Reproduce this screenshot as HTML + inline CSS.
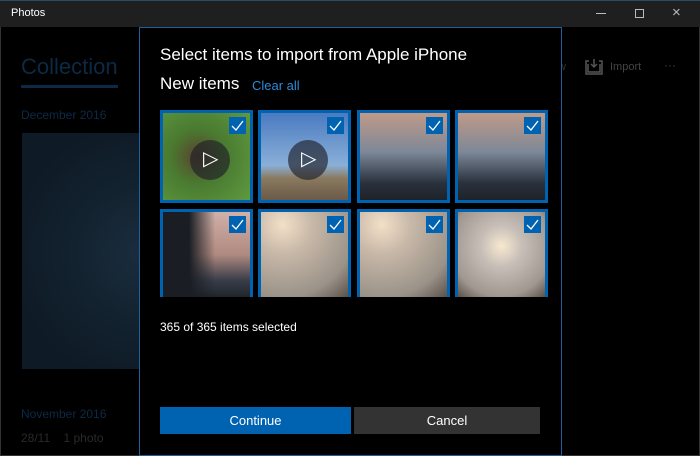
<!DOCTYPE html>
<html><head><style>
*{margin:0;padding:0;box-sizing:border-box}
body{width:700px;height:456px;background:#000;position:relative;overflow:hidden;font-family:"Segoe UI","Liberation Sans",sans-serif;color:#fff}
.abs{position:absolute}
.title{left:0;top:0;width:700px;height:27px;background:#1f1f1f;border-top:1px solid #2a4a6a}
.tile{position:absolute;width:93px;height:93px;border:3px solid #0063b1;overflow:hidden}
.chk{position:absolute;right:4px;top:4px;width:17px;height:17px;background:#0063b1}
.chk svg{position:absolute;left:2px;top:3px}
.play{position:absolute;left:27px;top:27px;width:40px;height:40px;border-radius:50%;background:rgba(30,30,40,.65)}
</style></head><body>
<div class="abs title"></div>
<div class="abs" style="left:11px;top:7px;font-size:11px;color:#fff">Photos</div>
<div class="abs" style="left:596px;top:13px;width:10px;height:1px;background:#bbb"></div>
<div class="abs" style="left:635px;top:9px;width:9px;height:9px;border:1px solid #bbb"></div>
<div class="abs" style="left:672px;top:4px;font-size:15px;color:#bbb">×</div>
<div class="abs" style="left:0;top:27px;width:1px;height:429px;background:#333"></div>
<div class="abs" style="left:699px;top:27px;width:1px;height:429px;background:#333"></div>
<div class="abs" style="left:0;top:455px;width:700px;height:1px;background:#333"></div>
<div class="abs" style="left:21px;top:54px;font-size:22px;color:#0c2a45">Collection</div>
<div class="abs" style="left:21px;top:85px;width:97px;height:3px;background:#0c2a45"></div>
<div class="abs" style="left:21px;top:108px;font-size:12px;color:#0c2a45">December 2016</div>
<div class="abs" style="left:22px;top:133px;width:118px;height:236px;background:radial-gradient(circle at 120px 120px,#1a2d3e 0,#13222f 40%,#0e1a26 80%)"></div>
<div class="abs" style="left:21px;top:407px;font-size:12px;color:#0c2a45">November 2016</div>
<div class="abs" style="left:21px;top:431px;font-size:12px;color:#2a2a2a">28/11 &nbsp;&nbsp; 1 photo</div>
<div class="abs" style="left:558px;top:61px;font-size:11px;color:#333">w</div>
<svg class="abs" style="left:585px;top:58px" width="18" height="17"><path d="M4 3H1v13h16V3h-3M3 6v8h12V6" fill="none" stroke="#555" stroke-width="1.5"/><path d="M9 1v8M6 6l3 3 3-3" fill="none" stroke="#555" stroke-width="1.5"/></svg>
<div class="abs" style="left:610px;top:61px;font-size:11px;color:#444">Import</div>
<div class="abs" style="left:664px;top:58px;font-size:12px;color:#444">···</div>
<div class="abs" style="left:139px;top:27px;width:423px;height:429px;background:#000;border:1px solid #1f5f9a"></div>
<div class="abs" style="left:160px;top:45px;font-size:17px">Select items to import from Apple iPhone</div>
<div class="abs" style="left:160px;top:74px;font-size:17px">New items</div>
<div class="abs" style="left:252px;top:78px;font-size:13px;color:#2b8ad8">Clear all</div>
<div class="tile" style="left:160px;top:110px;background:radial-gradient(circle at 40% 50%,#5a4030 0,#4a7a30 40%,#5e9a40 100%)"><div class="play"><span style="position:absolute;left:13px;top:6px;font-size:20px">▷</span></div><div class="chk"><svg width="13" height="11"><path d="M1 6l4 4 7-9" fill="none" stroke="#fff" stroke-width="1.3"/></svg></div></div>
<div class="tile" style="left:258px;top:110px;background:linear-gradient(#4a7ac0,#8ab0d8 60%,#8a7a60 75%,#6a5a48)"><div class="play"><span style="position:absolute;left:13px;top:6px;font-size:20px">▷</span></div><div class="chk"><svg width="13" height="11"><path d="M1 6l4 4 7-9" fill="none" stroke="#fff" stroke-width="1.3"/></svg></div></div>
<div class="tile" style="left:357px;top:110px;background:linear-gradient(#c09a88,#7c8898 45%,#2a323e 80%,#1e2228)"><div class="chk"><svg width="13" height="11"><path d="M1 6l4 4 7-9" fill="none" stroke="#fff" stroke-width="1.3"/></svg></div></div>
<div class="tile" style="left:455px;top:110px;background:linear-gradient(#c09a88,#7c8898 45%,#2a323e 80%,#1e2228)"><div class="chk"><svg width="13" height="11"><path d="M1 6l4 4 7-9" fill="none" stroke="#fff" stroke-width="1.3"/></svg></div></div>
<div class="tile" style="left:160px;top:209px;height:88px;border-bottom:none;background:linear-gradient(90deg,#1a1e24 30%,transparent 60%),linear-gradient(#d0b0a8,#b08a80 50%,#3a3e4a 80%,#20242a)"><div class="chk"><svg width="13" height="11"><path d="M1 6l4 4 7-9" fill="none" stroke="#fff" stroke-width="1.3"/></svg></div></div>
<div class="tile" style="left:258px;top:209px;height:88px;border-bottom:none;background:radial-gradient(circle at 25% 15%,#f4e0c8 0,#c8b8a8 30%,#9a9288 75%,#5a5248 100%)"><div class="chk"><svg width="13" height="11"><path d="M1 6l4 4 7-9" fill="none" stroke="#fff" stroke-width="1.3"/></svg></div></div>
<div class="tile" style="left:357px;top:209px;height:88px;border-bottom:none;background:radial-gradient(circle at 25% 15%,#f4e0c8 0,#c8b8a8 30%,#9a9288 75%,#5a5248 100%)"><div class="chk"><svg width="13" height="11"><path d="M1 6l4 4 7-9" fill="none" stroke="#fff" stroke-width="1.3"/></svg></div></div>
<div class="tile" style="left:455px;top:209px;height:88px;border-bottom:none;background:radial-gradient(circle at 50% 40%,#f8e8d0 0,#c8c0b8 30%,#a09890 75%,#5a5248 100%)"><div class="chk"><svg width="13" height="11"><path d="M1 6l4 4 7-9" fill="none" stroke="#fff" stroke-width="1.3"/></svg></div></div>
<div class="abs" style="left:160px;top:320px;font-size:12px">365 of 365 items selected</div>
<div class="abs" style="left:160px;top:407px;width:191px;height:27px;background:#0063b1;font-size:13px;text-align:center;line-height:27px">Continue</div>
<div class="abs" style="left:354px;top:407px;width:186px;height:27px;background:#333;font-size:13px;text-align:center;line-height:27px">Cancel</div>
</body></html>
